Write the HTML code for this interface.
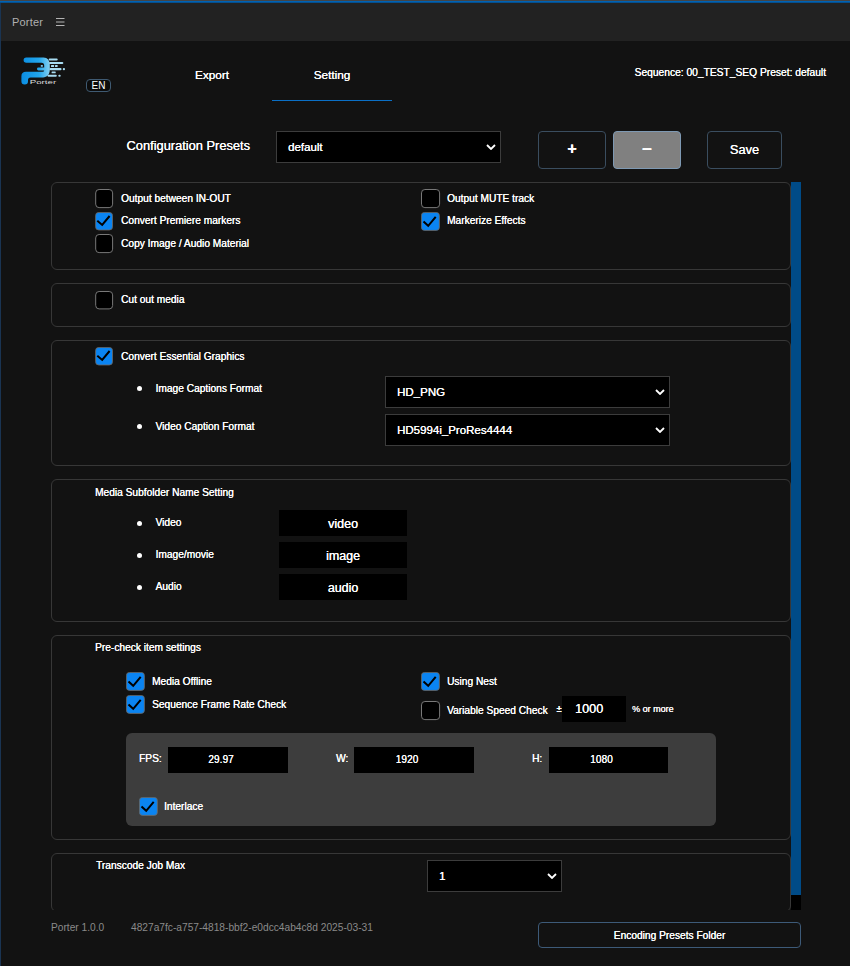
<!DOCTYPE html>
<html lang="en">
<head>
<meta charset="utf-8">
<title>Porter</title>
<style>
*{box-sizing:border-box;margin:0;padding:0}
html,body{width:850px;height:966px;overflow:hidden;background:#121212}
body{font-family:"Liberation Sans",sans-serif;color:#fff;font-size:11px;position:relative;text-shadow:.13px 0 0 currentColor}
.abs{position:absolute}
#topline{left:0;top:0;width:850px;height:1px;background:#454545}
#blueline{left:0;top:1px;width:850px;height:2px;background:linear-gradient(#0062b4 0,#0062b4 50%,#0b3c66 100%)}
#titlebar{left:0;top:3px;width:850px;height:38px;background:#222222}
#leftedge{left:0;top:3px;width:1px;height:963px;background:#1a3452}
#title{text-shadow:none;left:12px;top:15px;font-size:11px;letter-spacing:.2px;color:#b0b0b0;line-height:14px}
.tab{text-shadow:.08px 0 0 currentColor;top:60px;width:120px;height:30px;line-height:31px;text-align:center;font-size:11.800px;color:#fff}
#tabline{left:272px;top:100px;width:120px;height:1px;background:#0a6fc6}
#seq{right:24px;top:67px;font-size:10.25px;line-height:12px;color:#fff;white-space:nowrap}
#lang{left:86px;top:79px;width:25px;height:13px;border:1px solid #3f5a72;border-radius:4px;font-size:10px;line-height:12px;text-shadow:none;text-align:center;color:#fff;background:#0c0c0c}
#cfg{text-shadow:.08px 0 0 currentColor;left:126.500px;top:138px;font-size:12.850px;line-height:16px;white-space:nowrap}
.sel{text-shadow:.2px 0 0 currentColor;background:#000;border:1px solid #3c3c3c;color:#fff;font-size:11.500px;white-space:nowrap}
.sel span{position:absolute;left:11px;top:50%;transform:translateY(-50%);line-height:14px}
.sel svg{position:absolute;right:4px;top:50%;margin-top:-3px;width:10px;height:6px}
.btn{border:1px solid #3a4d5f;border-radius:4px;text-align:center;color:#fff;background:#121212}
.panel{left:51px;width:740px;border:1px solid #373737;border-radius:6px}
.lbl{font-size:10.2px;letter-spacing:0;line-height:13px;white-space:nowrap;color:#fff}
.dot{width:5px;height:5px;border-radius:50%;background:#fff}
.inp{text-shadow:.2px 0 0 currentColor;background:#000;color:#fff;text-align:center;white-space:nowrap}
#scroll{left:0;top:182px;width:850px;height:728px;overflow:hidden}
#track{left:791px;top:182px;width:10px;height:728px;background:#000}
#thumb{left:791px;top:182px;width:10px;height:713px;background:#004b87}
.foot{font-size:10.2px;line-height:13px;color:#8a8a8a;text-shadow:none;white-space:nowrap}
</style>
</head>
<body>
<div class="abs" id="titlebar"></div>
<div class="abs" id="topline"></div>
<div class="abs" id="blueline"></div>
<div class="abs" id="leftedge"></div>
<div class="abs" id="title">Porter</div>
<svg class="abs" style="left:56px;top:17px" width="9" height="10" viewBox="0 0 9 10"><rect x="0" y="1" width="8.500" height="1" fill="#b4b4b4"/><rect x="0" y="4.500" width="8.500" height="1" fill="#b4b4b4"/><rect x="0" y="8" width="8.500" height="1" fill="#b4b4b4"/></svg>

<!-- logo -->
<svg class="abs" id="logo" style="left:16px;top:52px" width="54" height="38" viewBox="16 52 54 38">
  <defs>
    <linearGradient id="lg" gradientUnits="userSpaceOnUse" x1="21" y1="0" x2="51" y2="0">
      <stop offset="0" stop-color="#0a8de2"/>
      <stop offset="0.600" stop-color="#22a6ec"/>
      <stop offset="1" stop-color="#8fd6f3"/>
    </linearGradient>
  </defs>
  <path d="M26.300 57.400 H43.500 C47.500 57.400 49.800 60.500 49.800 65 V69.500 C49.800 74.500 47 77.400 43 77.400 H30.500 Q28 77.400 28 79.900 V81.300 A3.300 3.300 0 0 1 21.400 81.300 V76.200 Q21.400 71.700 26 71.700 H42.500 Q44.200 71.700 44.200 70.400 H38.400 A1.400 1.400 0 0 1 38.400 67.600 H44.200 V65.500 Q44.200 62.800 41.500 62.800 H26.300 A2.700 2.700 0 0 1 26.300 57.400 Z" fill="url(#lg)"/>
  <rect x="40.800" y="65" width="2" height="1.800" fill="#7cc8ee"/>
  <g fill="#a8dcf2">
    <rect x="48.700" y="58.500" width="9" height="2" rx="1"/>
    <rect x="49" y="61.900" width="14.300" height="2" rx="1"/>
    <rect x="51" y="65.100" width="3.100" height="1.800" rx=".5"/><rect x="55" y="65.100" width="2.600" height="1.800" rx=".5"/>
    <rect x="49.500" y="68.100" width="12" height="2.200" rx="1"/><rect x="62.800" y="68.100" width="2.200" height="2.200" rx="1"/>
    <rect x="51.600" y="71.500" width="4.100" height="1.800" rx=".5"/>
    <rect x="47.500" y="74.700" width="9.300" height="2.100" rx="1"/><rect x="58.300" y="74.700" width="2.400" height="2.100" rx="1"/>
  </g>
  <text x="29.700" y="83.800" font-family="Liberation Sans, sans-serif" font-size="5.400" fill="#dcdcdc" textLength="26.500" lengthAdjust="spacingAndGlyphs" style="text-shadow:none">Porter</text>
</svg>
<div class="abs" id="lang">EN</div>

<div class="abs tab" style="left:152px">Export</div>
<div class="abs tab" style="left:272px">Setting</div>
<div class="abs" id="tabline"></div>
<div class="abs" id="seq">Sequence: 00_TEST_SEQ Preset: default</div>

<div class="abs" id="cfg">Configuration Presets</div>
<div class="abs sel" style="left:276px;top:131px;width:225px;height:32px"><span>default</span><svg viewBox="0 0 10 6"><path d="M1 1 L5 5 L9 1" fill="none" stroke="#fff" stroke-width="1.800"/></svg></div>
<div class="abs btn" style="left:538px;top:131px;width:68px;height:38px;font-size:16px;line-height:34px;font-weight:bold">+</div>
<div class="abs btn" style="left:613px;top:131px;width:68px;height:38px;font-size:17px;line-height:36px;font-weight:bold;background:#808080;border-color:#7e99b3">&#8722;</div>
<div class="abs btn" style="left:707px;top:131px;width:75px;height:38px;font-size:12.850px;line-height:36px;text-shadow:.08px 0 0 currentColor">Save</div>

<div class="abs" id="scroll">
<div class="abs" style="left:0;top:-182px;width:850px;height:1000px">

<!-- Panel 1 -->
<div class="abs panel" style="top:182px;height:88px"></div>
<svg class="abs cbx" style="left:95px;top:189px" width="20" height="20" viewBox="0 0 20 20"><rect x=".7" y=".5" width="16.900" height="18.100" rx="3.400" fill="#000" stroke="#787878" stroke-width="1"/></svg>
<div class="abs lbl" style="left:121px;top:192px">Output between IN-OUT</div>
<svg class="abs cbx" style="left:95px;top:212px" width="20" height="20" viewBox="0 0 20 20"><rect x=".6" y=".4" width="16.900" height="17.600" rx="3.200" fill="#0a84f2" stroke="#6e6862" stroke-width=".8"/><path d="M2.300 8.800 L7.200 12.900 L14.600 4" fill="none" stroke="#000" stroke-width="2"/></svg>
<div class="abs lbl" style="left:121px;top:214px">Convert Premiere markers</div>
<svg class="abs cbx" style="left:95px;top:234px" width="20" height="20" viewBox="0 0 20 20"><rect x=".7" y=".5" width="16.900" height="18.100" rx="3.400" fill="#000" stroke="#787878" stroke-width="1"/></svg>
<div class="abs lbl" style="left:121px;top:237px">Copy Image / Audio Material</div>
<svg class="abs cbx" style="left:421px;top:189px" width="20" height="20" viewBox="0 0 20 20"><rect x=".5" y=".5" width="18.100" height="18.100" rx="3.400" fill="#000" stroke="#787878" stroke-width="1"/></svg>
<div class="abs lbl" style="left:447px;top:192px">Output MUTE track</div>
<svg class="abs cbx" style="left:421px;top:212px" width="20" height="20" viewBox="0 0 20 20"><rect x=".4" y=".4" width="18" height="18" rx="3.200" fill="#0a84f2" stroke="#6e6862" stroke-width=".8"/><path d="M2.500 9.600 L7.200 13.800 L14.700 4.900" fill="none" stroke="#000" stroke-width="2"/></svg>
<div class="abs lbl" style="left:447px;top:214px">Markerize Effects</div>

<!-- Panel 2 -->
<div class="abs panel" style="top:283px;height:44px"></div>
<svg class="abs cbx" style="left:95px;top:291px" width="20" height="20" viewBox="0 0 20 20"><rect x=".7" y=".5" width="16.900" height="17.400" rx="3.400" fill="#000" stroke="#787878" stroke-width="1"/></svg>
<div class="abs lbl" style="left:121px;top:293px">Cut out media</div>

<!-- Panel 3 -->
<div class="abs panel" style="top:340px;height:126px"></div>
<svg class="abs cbx" style="left:95px;top:347px" width="20" height="20" viewBox="0 0 20 20"><rect x=".6" y=".4" width="16.900" height="17.600" rx="3.200" fill="#0a84f2" stroke="#6e6862" stroke-width=".8"/><path d="M2.300 8.800 L7.200 12.900 L14.600 4" fill="none" stroke="#000" stroke-width="2"/></svg>
<div class="abs lbl" style="left:121px;top:350px">Convert Essential Graphics</div>
<div class="abs dot" style="left:137px;top:386px"></div>
<div class="abs lbl" style="left:155.500px;top:382px">Image Captions Format</div>
<div class="abs sel" style="left:385px;top:376px;width:285px;height:32px"><span>HD_PNG</span><svg viewBox="0 0 10 6"><path d="M1 1 L5 5 L9 1" fill="none" stroke="#fff" stroke-width="1.800"/></svg></div>
<div class="abs dot" style="left:137px;top:424px"></div>
<div class="abs lbl" style="left:155.500px;top:420px">Video Caption Format</div>
<div class="abs sel" style="left:385px;top:414px;width:285px;height:32px"><span>HD5994i_ProRes4444</span><svg viewBox="0 0 10 6"><path d="M1 1 L5 5 L9 1" fill="none" stroke="#fff" stroke-width="1.800"/></svg></div>

<!-- Panel 4 -->
<div class="abs panel" style="top:479px;height:143px"></div>
<div class="abs lbl" style="left:95px;top:486px">Media Subfolder Name Setting</div>
<div class="abs dot" style="left:137px;top:521px"></div>
<div class="abs lbl" style="left:155.500px;top:516px">Video</div>
<div class="abs inp" style="left:279px;top:510px;width:128px;height:26px;font-size:12.500px;line-height:28px">video</div>
<div class="abs dot" style="left:137px;top:553px"></div>
<div class="abs lbl" style="left:155.500px;top:548px">Image/movie</div>
<div class="abs inp" style="left:279px;top:542px;width:128px;height:26px;font-size:12.500px;line-height:28px">image</div>
<div class="abs dot" style="left:137px;top:585px"></div>
<div class="abs lbl" style="left:155.500px;top:580px">Audio</div>
<div class="abs inp" style="left:279px;top:574px;width:128px;height:26px;font-size:12.500px;line-height:28px">audio</div>

<!-- Panel 5 -->
<div class="abs panel" style="top:635px;height:205px"></div>
<div class="abs lbl" style="left:95px;top:641px">Pre-check item settings</div>
<svg class="abs cbx" style="left:126px;top:672px" width="20" height="20" viewBox="0 0 20 20"><rect x=".4" y=".4" width="18" height="18" rx="3.200" fill="#0a84f2" stroke="#6e6862" stroke-width=".8"/><path d="M2.500 9.600 L7.200 13.800 L14.700 4.900" fill="none" stroke="#000" stroke-width="2"/></svg>
<div class="abs lbl" style="left:152px;top:675px">Media Offline</div>
<svg class="abs cbx" style="left:126px;top:695px" width="20" height="20" viewBox="0 0 20 20"><rect x=".4" y=".4" width="18" height="18" rx="3.200" fill="#0a84f2" stroke="#6e6862" stroke-width=".8"/><path d="M2.500 9.600 L7.200 13.800 L14.700 4.900" fill="none" stroke="#000" stroke-width="2"/></svg>
<div class="abs lbl" style="left:152px;top:698px">Sequence Frame Rate Check</div>
<svg class="abs cbx" style="left:421px;top:672px" width="20" height="20" viewBox="0 0 20 20"><rect x=".4" y=".4" width="18" height="18" rx="3.200" fill="#0a84f2" stroke="#6e6862" stroke-width=".8"/><path d="M2.500 9.600 L7.200 13.800 L14.700 4.900" fill="none" stroke="#000" stroke-width="2"/></svg>
<div class="abs lbl" style="left:447px;top:675px">Using Nest</div>
<svg class="abs cbx" style="left:421px;top:701px" width="20" height="20" viewBox="0 0 20 20"><rect x=".5" y=".5" width="18.100" height="18.100" rx="3.400" fill="#000" stroke="#787878" stroke-width="1"/></svg>
<div class="abs lbl" style="left:447px;top:704px">Variable Speed Check</div>
<div class="abs lbl" style="left:556.500px;top:703px;font-size:9px;font-weight:bold">&#177;</div>
<div class="abs inp" style="left:562px;top:696px;width:64px;height:26px;font-size:12.700px;line-height:27px;text-align:left;padding-left:13px">1000</div>
<div class="abs lbl" style="left:632px;top:703px;font-size:9px;letter-spacing:0">% or more</div>

<div class="abs" style="left:126px;top:733px;width:590px;height:93px;background:#3d3d3d;border-radius:6px"></div>
<div class="abs lbl" style="left:139px;top:752px">FPS:</div>
<div class="abs inp" style="left:168px;top:747px;width:120px;height:26px;font-size:10px;letter-spacing:.1px;line-height:26px;padding-right:14px">29.97</div>
<div class="abs lbl" style="left:336px;top:752px">W:</div>
<div class="abs inp" style="left:354px;top:747px;width:120px;height:26px;font-size:10px;letter-spacing:.1px;line-height:26px;padding-right:14px">1920</div>
<div class="abs lbl" style="left:532px;top:752px">H:</div>
<div class="abs inp" style="left:549px;top:747px;width:119px;height:26px;font-size:10px;letter-spacing:.1px;line-height:26px;padding-right:14px">1080</div>
<svg class="abs cbx" style="left:139px;top:797px" width="20" height="20" viewBox="0 0 20 20"><rect x=".4" y=".4" width="18" height="18" rx="3.200" fill="#0a84f2" stroke="#6e6862" stroke-width=".8"/><path d="M2.500 9.600 L7.200 13.800 L14.700 4.900" fill="none" stroke="#000" stroke-width="2"/></svg>
<div class="abs lbl" style="left:164px;top:800px">Interlace</div>

<!-- Panel 6 -->
<div class="abs panel" style="top:853px;height:59px"></div>
<div class="abs lbl" style="left:96px;top:859px">Transcode Job Max</div>
<div class="abs sel" style="left:427px;top:860px;width:135px;height:32px"><span>1</span><svg viewBox="0 0 10 6"><path d="M1 1 L5 5 L9 1" fill="none" stroke="#fff" stroke-width="1.800"/></svg></div>

</div>
</div>
<div class="abs" id="track"></div>
<div class="abs" id="thumb"></div>

<div class="abs foot" style="left:51px;top:921px">Porter 1.0.0</div>
<div class="abs foot" style="left:131px;top:921px">4827a7fc-a757-4818-bbf2-e0dcc4ab4c8d 2025-03-31</div>
<div class="abs btn" style="left:538px;top:922px;width:263px;height:26px;font-size:10.2px;line-height:26px;border-color:#3d5a78">Encoding Presets Folder</div>
</body>
</html>
